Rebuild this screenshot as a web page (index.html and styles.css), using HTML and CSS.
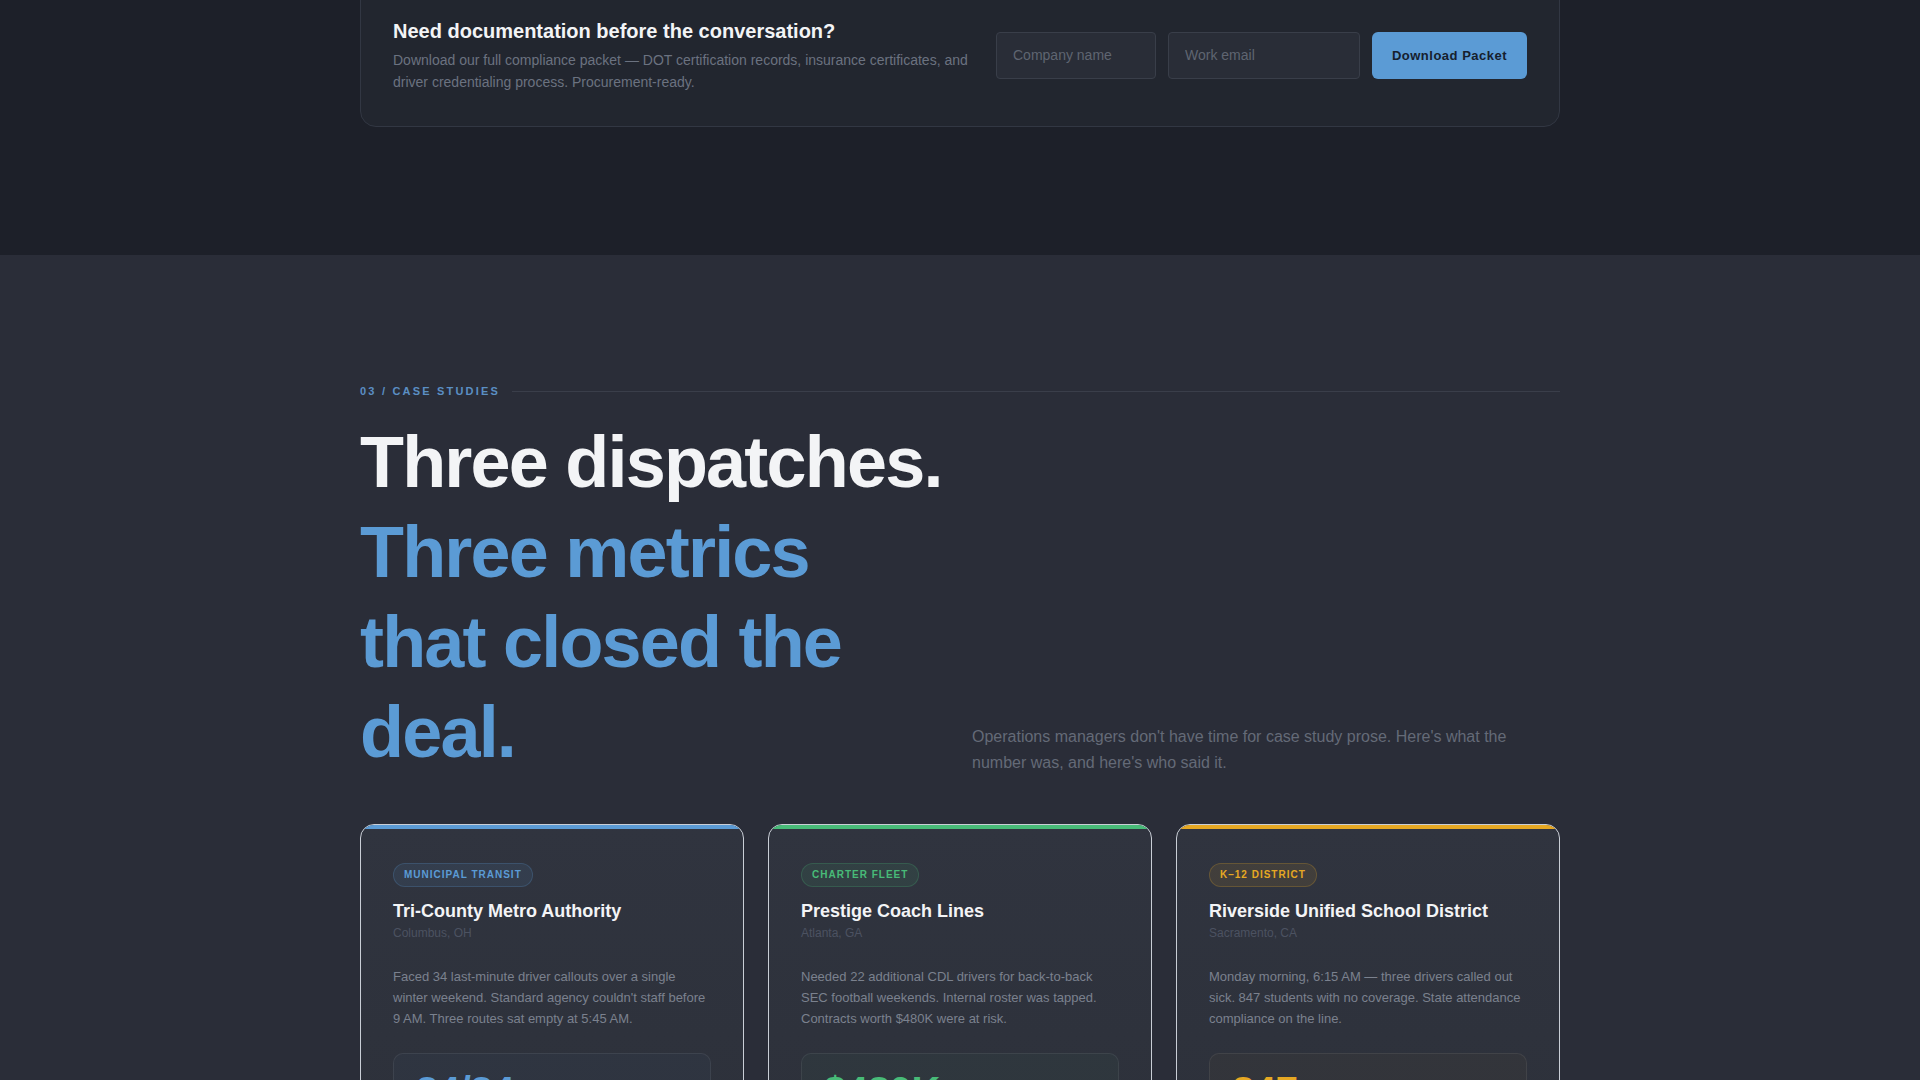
FILE: index.html
```html
<!DOCTYPE html>
<html lang="en">
<head>
<meta charset="utf-8">
<title>Case Studies</title>
<link rel="stylesheet" href="styles.css">
</head>
<body>
<section class="packet-section">
  <div class="container">
    <div class="packet-card">
      <div class="packet-text">
        <h3 class="packet-title">Need documentation before the conversation?</h3>
        <p class="packet-desc">Download our full compliance packet — DOT certification records, insurance certificates, and driver credentialing process. Procurement-ready.</p>
      </div>
      <form class="packet-form">
        <input class="field field-company" type="text" placeholder="Company name">
        <input class="field field-email" type="email" placeholder="Work email">
        <button class="btn" type="button">Download Packet</button>
      </form>
    </div>
  </div>
</section>

<section class="cases-section">
  <div class="container">
    <div class="eyebrow"><span class="eyebrow-text">03 / CASE STUDIES</span><span class="eyebrow-line"></span></div>
    <div class="cases-head">
      <h2 class="cases-title"><span class="title-white">Three dispatches.</span><br><span class="title-blue">Three metrics that closed the deal.</span></h2>
      <p class="cases-lede">Operations managers don't have time for case study prose. Here's what the number was, and here's who said it.</p>
    </div>
    <div class="case-grid">
      <article class="case-card case-blue">
        <span class="badge">Municipal Transit</span>
        <h4 class="case-name">Tri-County Metro Authority</h4>
        <div class="case-loc">Columbus, OH</div>
        <p class="case-desc">Faced 34 last-minute driver callouts over a single winter weekend. Standard agency couldn't staff before 9 AM. Three routes sat empty at 5:45 AM.</p>
        <div class="metric"><div class="metric-num">34/34</div><div class="metric-label">callouts covered before first route</div></div>
      </article>
      <article class="case-card case-green">
        <span class="badge">Charter Fleet</span>
        <h4 class="case-name">Prestige Coach Lines</h4>
        <div class="case-loc">Atlanta, GA</div>
        <p class="case-desc">Needed 22 additional CDL drivers for back-to-back SEC football weekends. Internal roster was tapped. Contracts worth $480K were at risk.</p>
        <div class="metric"><div class="metric-num">$480K</div><div class="metric-label">in charter contracts protected</div></div>
      </article>
      <article class="case-card case-amber">
        <span class="badge">K–12 District</span>
        <h4 class="case-name">Riverside Unified School District</h4>
        <div class="case-loc">Sacramento, CA</div>
        <p class="case-desc">Monday morning, 6:15 AM — three drivers called out sick. 847 students with no coverage. State attendance compliance on the line.</p>
        <div class="metric"><div class="metric-num">847</div><div class="metric-label">students picked up on time</div></div>
      </article>
    </div>
  </div>
</section>
</body>
</html>
```

FILE: styles.css
```css
* { box-sizing: border-box; }
html, body {
  margin: 0;
  padding: 0;
  background: #2a2d38;
  font-family: "Liberation Sans", Arial, sans-serif;
}
.container {
  width: 1200px;
  margin: 0 auto;
}

/* ---------- packet ---------- */
.packet-section {
  background: #1d2029;
  padding: 0 0 128px;
}
.packet-card {
  margin-top: -16px;
  background: #22262f;
  border: 1px solid #323743;
  border-radius: 16px;
  padding: 32px 32px 33px;
  display: flex;
  align-items: center;
  gap: 24px;
}
.packet-text { flex: 1; }
.packet-title {
  margin: 0 0 4px;
  color: #f3f4f6;
  font-size: 20px;
  line-height: 28px;
  font-weight: 700;
}
.packet-desc {
  margin: 0;
  color: #6b7280;
  font-size: 14px;
  line-height: 22px;
  max-width: 590px;
}
.packet-form {
  display: flex;
  gap: 12px;
  margin: 0;
}
.field {
  height: 47px;
  background: #292d37;
  border: 1px solid #393e49;
  border-radius: 4px;
  padding: 0 16px;
  color: #d1d5db;
  font-family: "Liberation Sans", Arial, sans-serif;
  font-size: 14px;
  outline: none;
}
.field::placeholder { color: #5f6571; }
.field-company { width: 160px; }
.field-email { width: 192px; }
.btn {
  height: 47px;
  width: 155px;
  background: #5b9bd5;
  border: none;
  border-radius: 6px;
  color: #16202e;
  font-family: "Liberation Sans", Arial, sans-serif;
  font-size: 13px;
  font-weight: 700;
  letter-spacing: 0.5px;
  cursor: pointer;
}

/* ---------- cases ---------- */
.cases-section {
  background: #2a2d38;
  padding: 128px 0 80px;
}
.eyebrow {
  display: flex;
  align-items: center;
  gap: 12px;
  margin-bottom: 18px;
}
.eyebrow-text {
  color: #5b8fc4;
  font-size: 11px;
  line-height: 16px;
  font-weight: 700;
  letter-spacing: 0.2em;
  white-space: nowrap;
}
.eyebrow-line {
  flex: 1;
  height: 1px;
  background: #3a3e4a;
}
.cases-head {
  display: grid;
  grid-template-columns: 1fr 1fr;
  column-gap: 24px;
  align-items: end;
  margin-bottom: 47px;
}
.cases-title {
  margin: 0;
  font-size: 72px;
  line-height: 90px;
  font-weight: 700;
  letter-spacing: -0.025em;
}
.title-white { color: #f3f4f6; }
.title-blue { color: #5b9bd5; }
.cases-lede {
  margin: 0 0 1px;
  color: #646a77;
  font-size: 16px;
  line-height: 26px;
  max-width: 560px;
}

.case-grid {
  display: grid;
  grid-template-columns: repeat(3, 1fr);
  gap: 24px;
}
.case-card {
  position: relative;
  overflow: hidden;
  border: 1px solid #c9ced6;
  border-radius: 14px;
  background: linear-gradient(180deg, #30343f 0%, #2c3039 100%);
  padding: 38px 32px 32px;
  min-height: 420px;
}
.case-card::before {
  content: "";
  position: absolute;
  top: 0;
  left: 0;
  right: 0;
  height: 4px;
  background: var(--accent);
}
.case-blue { --accent: #5b9bd5; --accent-soft: rgba(91, 155, 213, 0.10); --accent-line: rgba(91, 155, 213, 0.22); }
.case-green { --accent: #48bb78; --accent-soft: rgba(72, 187, 120, 0.10); --accent-line: rgba(72, 187, 120, 0.22); }
.case-amber { --accent: #e6a823; --accent-soft: rgba(230, 168, 35, 0.10); --accent-line: rgba(230, 168, 35, 0.22); }

.badge {
  display: inline-block;
  height: 24px;
  line-height: 22px;
  padding: 0 10px;
  border-radius: 12px;
  background: var(--accent-soft);
  border: 1px solid var(--accent-line);
  color: var(--accent);
  font-size: 10px;
  font-weight: 700;
  letter-spacing: 1px;
  text-transform: uppercase;
  vertical-align: top;
}
.case-name {
  margin: 12px 0 0;
  color: #f3f4f6;
  font-size: 18px;
  line-height: 24px;
  font-weight: 700;
}
.case-loc {
  margin-top: 1px;
  color: #4c5261;
  font-size: 12px;
  line-height: 18px;
}
.case-desc {
  margin: 24px 0 0;
  color: #7b818e;
  font-size: 13px;
  line-height: 21px;
}
.metric {
  margin-top: 24px;
  border: 1px solid rgba(255, 255, 255, 0.07);
  border-radius: 10px;
  padding: 15px 22px 18px;
}
.case-blue .metric { background: rgba(91, 155, 213, 0.03); }
.case-green .metric { background: rgba(72, 187, 120, 0.04); }
.case-amber .metric { background: rgba(230, 168, 35, 0.03); }
.metric-num {
  color: var(--accent);
  font-size: 40px;
  line-height: 44px;
  font-weight: 700;
  letter-spacing: -0.01em;
}
.metric-label {
  margin-top: 4px;
  color: #7b818e;
  font-size: 13px;
  line-height: 18px;
}
```
